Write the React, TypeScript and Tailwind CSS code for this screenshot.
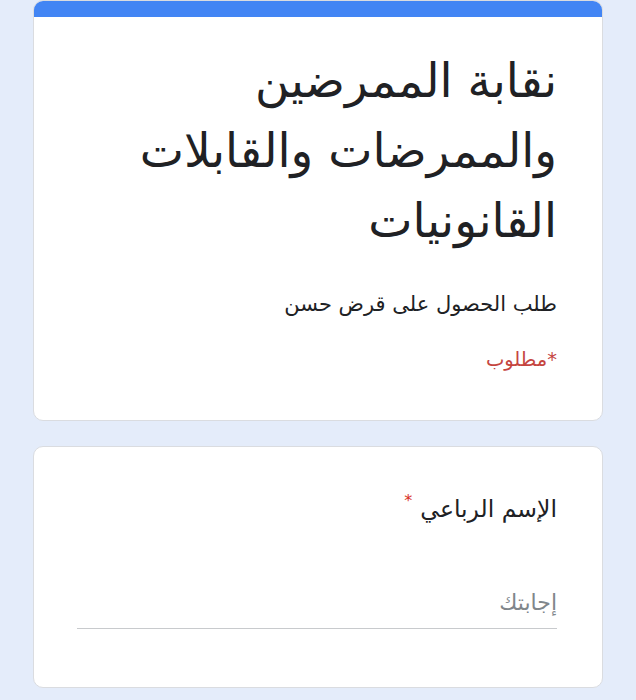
import React from 'react'

export default function App() {
  return (
    <div
      dir="rtl"
      className="min-h-[700px] w-full bg-[#e4ecfa] px-[33px] pb-6"
      style={{ fontFamily: '"DejaVu Sans", "Noto Sans", sans-serif' }}
    >
      {/* بطاقة العنوان */}
      <div className="overflow-hidden rounded-[10px] border border-[#dadce0] bg-white">
        <div className="h-[16px] bg-[#4285f4]" />
        <div className="pr-[45px] pl-[40px] pt-[29px] pb-[46px]">
          <h1 className="text-[47px] leading-[70px] text-[#202124]">
            نقابة الممرضين
            <br />
            والممرضات والقابلات
            <br />
            القانونيات
          </h1>
          <p className="mt-[34px] text-[21px] leading-[28px] text-[#202124]">طلب الحصول على قرض حسن</p>
          <p className="mt-[28px] text-[19.5px] leading-[28px] text-[#c5453f]">*مطلوب</p>
        </div>
      </div>

      {/* سؤال الاسم */}
      <div className="mt-[25px] rounded-[10px] border border-[#dadce0] bg-white pr-[45px] pl-[43px] pt-[45px] pb-[58px]">
        <div className="flex items-start gap-[8px] text-[23.5px] leading-[34px] text-[#202124]">
          <span>الإسم الرباعي</span>
          <span className="text-[16px] leading-[18px] text-[#d93025]">*</span>
        </div>
        <div className="mt-[62px] border-b border-[#c8cacd] pb-[10px]">
          <span className="text-[22px] leading-[30px] text-[#80868b]">إجابتك</span>
        </div>
      </div>
    </div>
  )
}
